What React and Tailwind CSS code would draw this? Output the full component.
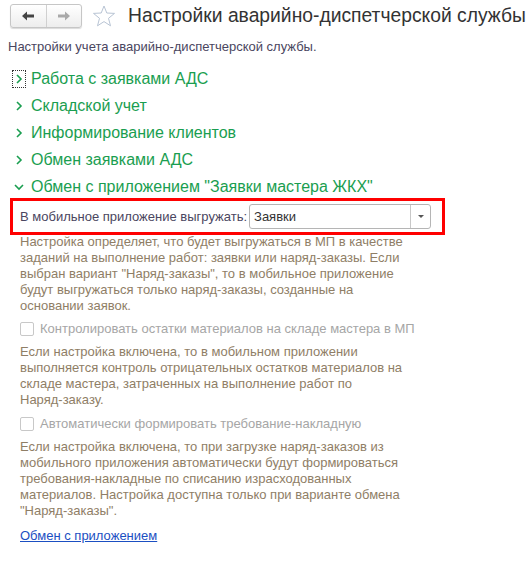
import React from "react";

const groups = [
  "Работа с заявками АДС",
  "Складской учет",
  "Информирование клиентов",
  "Обмен заявками АДС",
];

function Chevron({ open }) {
  return (
    <svg width="10" height="12" viewBox="0 0 10 12" className="shrink-0">
      {open ? (
        <path d="M1 4 L5 8 L9 4" fill="none" stroke="#1a9e50" strokeWidth="1.6" />
      ) : (
        <path d="M3 2 L7 6 L3 10" fill="none" stroke="#1a9e50" strokeWidth="1.6" />
      )}
    </svg>
  );
}

function Check({ label }) {
  return (
    <div className="flex items-center h-[20px] pl-[20px] gap-[6px]">
      <div className="w-[14px] h-[14px] border border-[#c8c8c8] rounded-[2px] bg-white" />
      <span className="text-[13px] text-[#a6a6a6]">{label}</span>
    </div>
  );
}

export default function App() {
  return (
    <div className="bg-white w-[527px] h-[575px] overflow-hidden" style={{ fontFamily: '"Liberation Sans", Arial, sans-serif' }}>
      {/* header */}
      <div className="flex items-center pt-[4px] pl-[10px] h-[28px] whitespace-nowrap">
        <div className="shrink-0 flex w-[72px] h-[24px] border border-[#c6c6c6] rounded-[3px] bg-gradient-to-b from-white to-[#ededed] shadow-[0_1px_1px_rgba(0,0,0,0.15)]">
          <div className="flex-1 flex items-center justify-center border-r border-[#d0d0d0]">
            <svg width="13" height="10" viewBox="0 0 13 10">
              <path d="M0 5 L5 0.5 L5 3.5 L12 3.5 L12 6.5 L5 6.5 L5 9.5 Z" fill="#444" />
            </svg>
          </div>
          <div className="flex-1 flex items-center justify-center">
            <svg width="13" height="10" viewBox="0 0 13 10">
              <path d="M13 5 L8 0.5 L8 3.5 L1 3.5 L1 6.5 L8 6.5 L8 9.5 Z" fill="#a9a9a9" />
            </svg>
          </div>
        </div>
        <svg width="24" height="22" viewBox="0 0 24 22" className="ml-[10px] shrink-0">
          <path d="M12 1 L14.8 8 L22.5 8.4 L16.5 13.3 L18.5 20.8 L12 16.6 L5.5 20.8 L7.5 13.3 L1.5 8.4 L9.2 8 Z" fill="none" stroke="#b8c4d4" strokeWidth="1" strokeLinejoin="round" />
        </svg>
        <span className="ml-[12px] shrink-0 text-[19.3px] text-[#333] leading-none">Настройки аварийно-диспетчерской службы</span>
      </div>

      <div className="pl-[8px] mt-[11px] text-[13px] text-[#4a4660] leading-[16px]">
        Настройки учета аварийно-диспетчерской службы.
      </div>

      {/* groups */}
      <div className="mt-[10px]">
        {groups.map((g, i) => (
          <div key={g} className="flex items-center h-[27px] pl-[13px] gap-[6px]">
            <div className={"w-[12px] h-[16px] flex items-center justify-center " + (i === 0 ? "outline outline-1 outline-dotted outline-[#333]" : "")}>
              <Chevron />
            </div>
            <span className="text-[16px] text-[#1a9e50]">{g}</span>
          </div>
        ))}
        <div className="flex items-center h-[27px] pl-[13px] gap-[6px]">
          <div className="w-[12px] h-[16px] flex items-center justify-center">
            <Chevron open />
          </div>
          <span className="text-[16px] text-[#1a9e50]">Обмен с приложением "Заявки мастера ЖКХ"</span>
        </div>
      </div>

      {/* red framed field */}
      <div className="ml-[10px] mt-[-2px] w-[435px] h-[37px] border-[3px] border-[#ff0000] flex items-center pl-[7px] gap-[2px]">
        <span className="text-[13px] text-[#4a4660] whitespace-nowrap">В мобильное приложение выгружать:</span>
        <div className="w-[182px] h-[25px] border border-[#b5b5b5] rounded-[3px] flex bg-white">
          <div className="flex-1 flex items-center pl-[4px] text-[13px] text-[#333]">Заявки</div>
          <div className="w-[20px] border-l border-[#c8c8c8] flex items-center justify-center">
            <svg width="6" height="4" viewBox="0 0 6 4"><path d="M0 0 L6 0 L3 3 Z" fill="#555" /></svg>
          </div>
        </div>
      </div>

      <div className="pl-[20px] pr-[8px] mt-[-1px] text-[13px] leading-[16px] text-[#8f7e66] w-[420px]">
        Настройка определяет, что будет выгружаться в МП в качестве заданий на выполнение работ: заявки или наряд-заказы. Если выбран вариант "Наряд-заказы", то в мобильное приложение будут выгружаться только наряд-заказы, созданные на основании заявок.
      </div>

      <div className="mt-[5px]">
        <Check label="Контролировать остатки материалов на складе мастера в МП" />
      </div>
      <div className="pl-[20px] mt-[5px] text-[13px] leading-[16px] text-[#8f7e66] w-[420px]">
        Если настройка включена, то в мобильном приложении выполняется контроль отрицательных остатков материалов на складе мастера, затраченных на выполнение работ по <span className="whitespace-nowrap">Наряд-заказу.</span>
      </div>

      <div className="mt-[6px]">
        <Check label="Автоматически формировать требование-накладную" />
      </div>
      <div className="pl-[20px] mt-[5px] text-[13px] leading-[16px] text-[#8f7e66] w-[420px]">
        Если настройка включена, то при загрузке наряд-заказов из мобильного приложения автоматически будут формироваться требования-накладные по списанию израсходованных материалов. Настройка доступна только при варианте обмена "Наряд-заказы".
      </div>

      <div className="pl-[20px] mt-[9px] text-[13px] leading-[16px]">
        <a href="#" className="text-[#1b4fc2] underline">Обмен с приложением</a>
      </div>
    </div>
  );
}
